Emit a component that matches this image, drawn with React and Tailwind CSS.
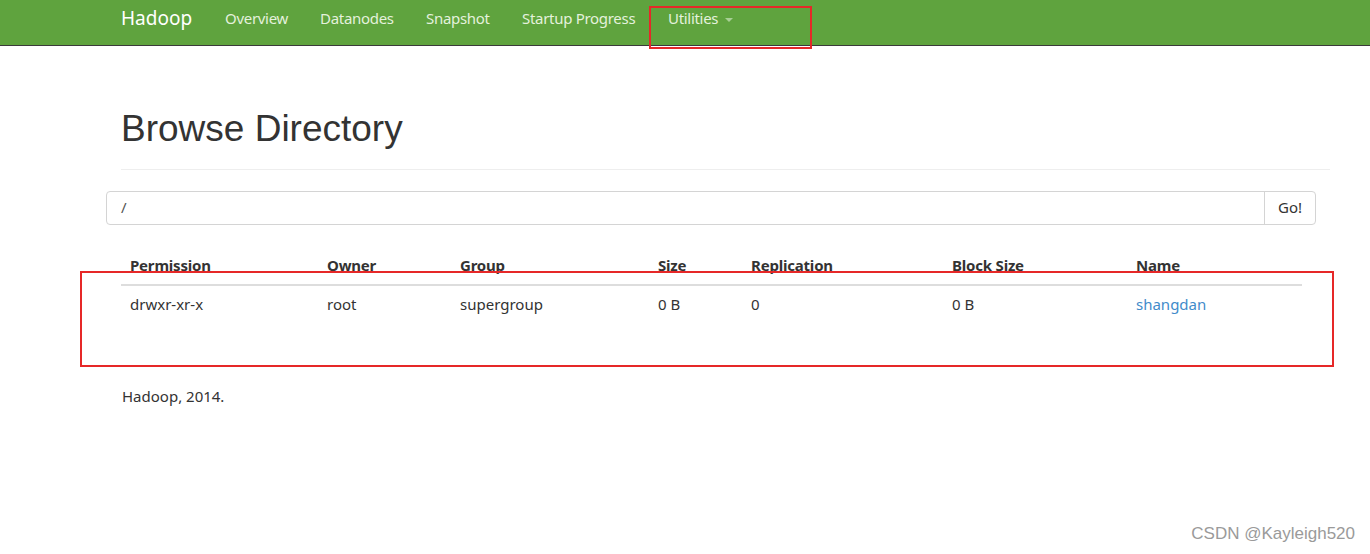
import React from 'react'

const navItems = [
  { label: 'Overview', w: 'w-[95px]' },
  { label: 'Datanodes', w: 'w-[106px]' },
  { label: 'Snapshot', w: 'w-[96px]' },
  { label: 'Startup Progress', w: 'w-[146px]' },
]

const rows = [
  ['drwxr-xr-x', 'root', 'supergroup', '0 B', '0', '0 B', 'shangdan'],
]

const cols = [
  { label: 'Permission', w: 'w-[197px]' },
  { label: 'Owner', w: 'w-[133px]' },
  { label: 'Group', w: 'w-[198px]' },
  { label: 'Size', w: 'w-[93px]' },
  { label: 'Replication', w: 'w-[201px]' },
  { label: 'Block Size', w: 'w-[184px]' },
  { label: 'Name', w: 'flex-1' },
]

function App() {
  return (
    <div className="relative w-full h-[554px] bg-white overflow-hidden font-['Noto_Sans',sans-serif] text-[#333]">
      {/* navbar */}
      <nav className="h-[46px] bg-[#5fa33e] border-b border-[#3a3a3a] flex items-center pl-[121px] pb-[8px]">
        <span className="w-[104px] text-white text-[19px] leading-none">Hadoop</span>
        {navItems.map((item) => (
          <span key={item.label} className={`${item.w} text-[15px] text-[#e4f1dc] leading-none tracking-[-0.3px]`}>
            {item.label}
          </span>
        ))}
        <span className="flex items-center text-[15px] text-[#e4f1dc] leading-none tracking-[-0.3px]">
          Utilities
          <span className="ml-[7px] mt-[2px] w-0 h-0 border-l-[4px] border-r-[4px] border-t-[4px] border-l-transparent border-r-transparent border-t-[#a8cf95]" />
        </span>
      </nav>

      <div className="ml-[106px] w-[1224px]">
        {/* page header */}
        <div className="ml-[15px] pt-[63px] pb-[19px] border-b border-[#eee]">
          <h1 className="font-['Liberation_Sans',Arial,sans-serif] text-[37px] leading-[1.1] text-[#333]">
            Browse Directory
          </h1>
        </div>

        {/* path input */}
        <div className="mt-[21px] w-[1210px] h-[34px] flex border border-[#d4d4d4] rounded-[4px]">
          <div className="flex-1 flex items-center pl-[14px] text-[15px] text-[#555]">/</div>
          <div className="w-[51px] flex items-center justify-center border-l border-[#d4d4d4] text-[15px] text-[#333]">
            Go!
          </div>
        </div>

        {/* listing */}
        <div className="ml-[15px] w-[1181px] mt-[30px]">
          <div className="flex border-b-2 border-[#ddd] pb-[9px]">
            {cols.map((c) => (
              <div key={c.label} className={`${c.w} pl-[9px] text-[15px] font-bold leading-[20px] tracking-[-0.2px]`}>
                {c.label}
              </div>
            ))}
          </div>
          {rows.map((r, i) => (
            <div key={i} className="flex pt-[8px]">
              {r.map((cell, j) => (
                <div
                  key={j}
                  className={`${cols[j].w} pl-[9px] text-[15px] leading-[20px] ${j === 6 ? 'text-[#428bca]' : ''}`}
                >
                  {cell}
                </div>
              ))}
            </div>
          ))}
        </div>

        {/* footer */}
        <p className="ml-[16px] mt-[72px] text-[15px] leading-[20px]">Hadoop, 2014.</p>
      </div>

      {/* annotation boxes */}
      <div className="absolute left-[649px] top-[6px] w-[163px] h-[43px] border-2 border-[#e62828]" />
      <div className="absolute left-[80px] top-[271px] w-[1254px] h-[96px] border-2 border-[#e62828]" />

      {/* watermark */}
      <div className="absolute right-[15px] bottom-[8px] font-['Liberation_Sans',Arial,sans-serif] text-[17px] text-[#9a9a9a]">
        CSDN @Kayleigh520
      </div>
    </div>
  )
}

export default App
